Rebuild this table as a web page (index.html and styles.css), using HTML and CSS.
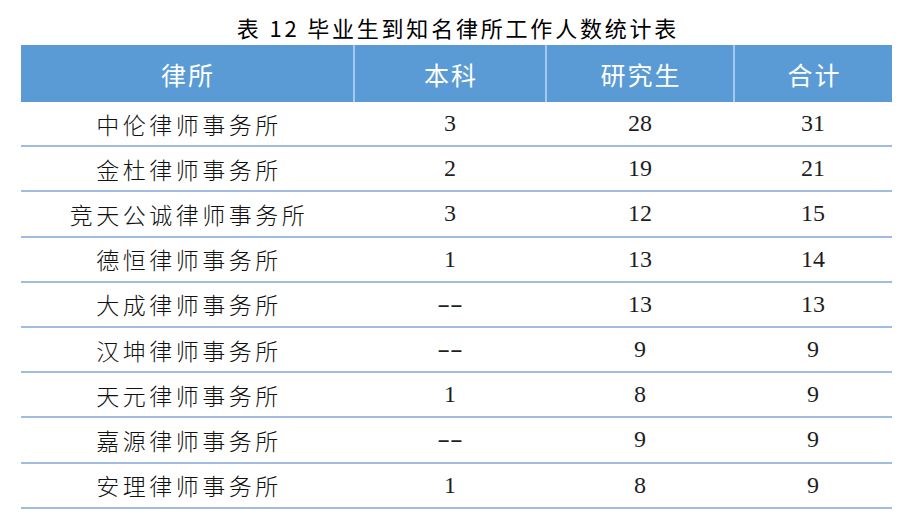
FILE: index.html
```html
<!DOCTYPE html>
<html lang="zh-CN">
<head>
<meta charset="utf-8">
<title>表 12 毕业生到知名律所工作人数统计表</title>
<link rel="stylesheet" href="styles.css">
</head>
<body>
<div class="page">
  <h1 class="caption">表 12 毕业生到知名律所工作人数统计表</h1>
  <table class="stats">
    <colgroup>
      <col class="c-name"><col class="c-ben"><col class="c-yan"><col class="c-sum">
    </colgroup>
    <thead>
      <tr><th>律所</th><th>本科</th><th>研究生</th><th>合计</th></tr>
    </thead>
    <tbody>
      <tr><td class="name">中伦律师事务所</td><td>3</td><td>28</td><td>31</td></tr>
      <tr><td class="name">金杜律师事务所</td><td>2</td><td>19</td><td>21</td></tr>
      <tr><td class="name">竞天公诚律师事务所</td><td>3</td><td>12</td><td>15</td></tr>
      <tr><td class="name">德恒律师事务所</td><td>1</td><td>13</td><td>14</td></tr>
      <tr><td class="name">大成律师事务所</td><td><span class="nil">--</span></td><td>13</td><td>13</td></tr>
      <tr><td class="name">汉坤律师事务所</td><td><span class="nil">--</span></td><td>9</td><td>9</td></tr>
      <tr><td class="name">天元律师事务所</td><td>1</td><td>8</td><td>9</td></tr>
      <tr><td class="name">嘉源律师事务所</td><td><span class="nil">--</span></td><td>9</td><td>9</td></tr>
      <tr><td class="name">安理律师事务所</td><td>1</td><td>8</td><td>9</td></tr>
    </tbody>
  </table>
</div>
</body>
</html>
```
FILE: styles.css
```css
html, body {
  margin: 0;
  padding: 0;
  background: #ffffff;
}
.page {
  width: 912px;
  height: 526px;
  padding: 0 20px 0 21px;
  box-sizing: border-box;
}
.caption {
  margin: 0;
  height: 45px;
  box-sizing: border-box;
  padding: 14px 0 0 3px;
  text-align: center;
  font-family: "Noto Sans CJK SC", sans-serif;
  font-weight: 400;
  font-size: 22px;
  line-height: 26px;
  letter-spacing: 2.8px;
  color: #000000;
}
.stats {
  width: 871px;
  border-collapse: collapse;
  table-layout: fixed;
}
.c-name { width: 333px; }
.c-ben { width: 192px; }
.c-yan { width: 188px; }
.c-sum { width: 158px; }
.stats th {
  height: 57px;
  padding: 0 0 0 2px;
  background: #5b9bd5;
  color: #ffffff;
  font-family: "Noto Sans CJK SC", sans-serif;
  font-weight: 400;
  font-size: 25px;
  letter-spacing: 2px;
  text-align: center;
  vertical-align: middle;
  border-left: 2px solid #a4c8ee;
}
.stats th:first-child {
  border-left: none;
}
.stats td {
  height: 43.2px;
  padding: 0;
  text-align: center;
  vertical-align: middle;
  border-bottom: 2px solid #a0bce2;
  font-family: "Liberation Serif", serif;
  font-size: 24px;
  color: #1e1e1e;
}
.stats td.name {
  font-family: "Noto Sans CJK SC", sans-serif;
  font-weight: 300;
  font-size: 23px;
  letter-spacing: 3.5px;
  padding-left: 3px;
  color: #111111;
}
.nil {
  display: inline-block;
  transform: scaleX(1.6);
}
```
